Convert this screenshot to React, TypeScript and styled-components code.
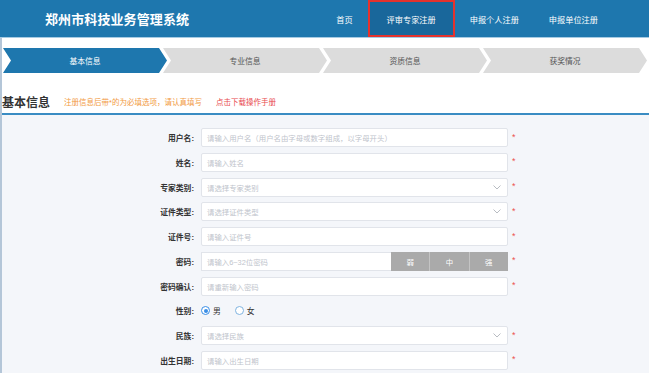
import React from 'react';
import styled, { createGlobalStyle } from 'styled-components';

const GlobalStyle = createGlobalStyle`
  html, body {
    margin: 0;
    padding: 0;
    background: #ffffff;
    font-family: 'Liberation Sans', 'Noto Sans CJK SC', sans-serif;
  }
`;

const StyledHeader = styled.div`
  height: 37px;
  background-color: #1e77ae;
  border-bottom: 1px solid #a6cbe3;
  display: flex;
  align-items: stretch;
  justify-content: space-between;
  padding: 0 36px 0 45px;
`;

const StyledTitle = styled.div`
  color: #ffffff;
  font-size: 13px;
  font-weight: bold;
  display: flex;
  align-items: center;
  letter-spacing: 0.1px;
`;

const StyledNav = styled.div`
  display: flex;
  align-items: stretch;
`;

const StyledNavItem = styled.div<{ $active?: boolean }>`
  display: flex;
  align-items: center;
  color: #ffffff;
  font-size: 8.2px;
  padding: ${(p) => (p.$active ? '0 17px' : '0 15px')};
  background: ${(p) => (p.$active ? '#19679b' : 'transparent')};
  border: ${(p) => (p.$active ? '2px solid #e5322d' : 'none')};
  box-sizing: border-box;
`;

const StyledBody = styled.div`
  border-left: 2px solid #b4c6d8;
`;

const StyledSteps = styled.div`
  display: flex;
  padding: 10px 0 0 1px;
`;

const StyledStep = styled.div<{ $active?: boolean; $first?: boolean }>`
  width: 164px;
  height: 25px;
  margin-left: ${(p) => (p.$first ? '0' : '-4px')};
  background: ${(p) => (p.$active ? '#1e77ae' : '#dcdcdc')};
  color: ${(p) => (p.$active ? '#ffffff' : '#555555')};
  font-size: 7.8px;
  display: flex;
  align-items: center;
  justify-content: center;
  clip-path: polygon(
    0 0,
    calc(100% - 8px) 0,
    100% 50%,
    calc(100% - 8px) 100%,
    0 100%,
    8px 50%
  );
`;

const StyledHeadingRow = styled.div`
  display: flex;
  align-items: center;
  height: 20px;
  margin-top: 18px;
  border-bottom: 2px solid #3a8cc3;
  padding-bottom: 2px;
`;

const StyledHeading = styled.div`
  font-size: 12px;
  font-weight: bold;
  color: #333333;
  margin-right: 14px;
`;

const StyledNote = styled.span<{ $color: string }>`
  font-size: 7.5px;
  color: ${(p) => p.$color};
  margin-right: 14px;
`;

const StyledForm = styled.div`
  background: #f4f6fa;
  padding-top: 13px;
  padding-bottom: 20px;
  display: flex;
  flex-direction: column;
  gap: 5.75px;
`;

const StyledRow = styled.div`
  display: flex;
  align-items: center;
  height: 19px;
`;

const StyledLabelCell = styled.div`
  width: 199px;
  display: flex;
  justify-content: flex-end;
`;

const StyledLabel = styled.div`
  text-align: right;
  font-size: 7.8px;
  font-weight: bold;
  color: #333333;
  padding-right: 7px;
`;

const StyledField = styled.div`
  width: 307px;
  height: 19px;
  box-sizing: border-box;
  background: #ffffff;
  border: 1px solid #e1e4ea;
  border-radius: 2px;
  display: flex;
  align-items: center;
  padding: 0 6px 0 5px;
  font-size: 7.4px;
  color: #c0c4cc;
`;

const StyledPlaceholder = styled.span`
  flex: 1;
`;

const StyledPasswordBox = styled.div`
  width: 307px;
  height: 19px;
  display: flex;
`;

const StyledPasswordInput = styled.div`
  width: 190px;
  box-sizing: border-box;
  background: #ffffff;
  border: 1px solid #e1e4ea;
  border-right: none;
  display: flex;
  align-items: center;
  padding-left: 5px;
  font-size: 7.4px;
  color: #c0c4cc;
`;

const StyledStrength = styled.div`
  flex: 1;
  background: #aaaaaa;
  color: #ffffff;
  font-size: 7.4px;
  display: flex;
  align-items: center;
  justify-content: center;
  & + & {
    border-left: 1px solid #c4c4c4;
  }
`;

const StyledStar = styled.span`
  color: #ec5050;
  font-size: 9px;
  margin-left: 4px;
  margin-top: -2px;
`;

const StyledRadioGroup = styled.div`
  display: flex;
  align-items: center;
  font-size: 7.8px;
  color: #333333;
`;

const StyledRadio = styled.span<{ $checked?: boolean }>`
  width: 9px;
  height: 9px;
  border-radius: 50%;
  box-sizing: border-box;
  border: 1px solid ${(p) => (p.$checked ? '#3a8ee6' : '#7fb3e0')};
  background: #ffffff;
  display: inline-flex;
  align-items: center;
  justify-content: center;
  margin-right: 3px;

  &::after {
    content: '';
    width: 4px;
    height: 4px;
    border-radius: 50%;
    background: ${(p) => (p.$checked ? '#3a8ee6' : 'transparent')};
  }
`;

const StyledRadioOption = styled.label`
  display: flex;
  align-items: center;
  margin-right: 14px;
`;

const Chevron = () => (
  <svg width="8" height="5" viewBox="0 0 8 5">
    <path d="M0.5 0.5 L4 4 L7.5 0.5" fill="none" stroke="#b0b4bb" strokeWidth="0.9" />
  </svg>
);

type RowDef = { label: string; placeholder?: string; select?: boolean; kind?: 'password' | 'gender' };

const rows: RowDef[] = [
  { label: '用户名:', placeholder: '请输入用户名（用户名由字母或数字组成，以字母开头）' },
  { label: '姓名:', placeholder: '请输入姓名' },
  { label: '专家类别:', placeholder: '请选择专家类别', select: true },
  { label: '证件类型:', placeholder: '请选择证件类型', select: true },
  { label: '证件号:', placeholder: '请输入证件号' },
  { label: '密码:', placeholder: '请输入6~32位密码', kind: 'password' },
  { label: '密码确认:', placeholder: '请重新输入密码' },
  { label: '性别:', kind: 'gender' },
  { label: '民族:', placeholder: '请选择民族', select: true },
  { label: '出生日期:', placeholder: '请输入出生日期' },
];

const steps = ['基本信息', '专业信息', '资质信息', '获奖情况'];

const App: React.FC = () => {
  return (
    <>
      <GlobalStyle />
      <StyledHeader>
        <StyledTitle>郑州市科技业务管理系统</StyledTitle>
        <StyledNav>
          <StyledNavItem>首页</StyledNavItem>
          <StyledNavItem $active>评审专家注册</StyledNavItem>
          <StyledNavItem>申报个人注册</StyledNavItem>
          <StyledNavItem>申报单位注册</StyledNavItem>
        </StyledNav>
      </StyledHeader>
      <StyledBody>
        <StyledSteps>
          {steps.map((s, i) => (
            <StyledStep key={s} $active={i === 0} $first={i === 0}>
              {s}
            </StyledStep>
          ))}
        </StyledSteps>
        <StyledHeadingRow>
          <StyledHeading>基本信息</StyledHeading>
          <StyledNote $color="#f29a3f">注册信息后带*的为必填选项，请认真填写</StyledNote>
          <StyledNote $color="#e8474b">点击下载操作手册</StyledNote>
        </StyledHeadingRow>
        <StyledForm>
          {rows.map((r) => (
            <StyledRow key={r.label}>
              <StyledLabelCell>
                <StyledLabel>{r.label}</StyledLabel>
              </StyledLabelCell>
              {r.kind === 'gender' ? (
                <StyledRadioGroup>
                  <StyledRadioOption>
                    <StyledRadio $checked />男
                  </StyledRadioOption>
                  <StyledRadioOption>
                    <StyledRadio />女
                  </StyledRadioOption>
                </StyledRadioGroup>
              ) : r.kind === 'password' ? (
                <>
                  <StyledPasswordBox>
                    <StyledPasswordInput>{r.placeholder}</StyledPasswordInput>
                    <StyledStrength>弱</StyledStrength>
                    <StyledStrength>中</StyledStrength>
                    <StyledStrength>强</StyledStrength>
                  </StyledPasswordBox>
                  <StyledStar>*</StyledStar>
                </>
              ) : (
                <>
                  <StyledField>
                    <StyledPlaceholder>{r.placeholder}</StyledPlaceholder>
                    {r.select && <Chevron />}
                  </StyledField>
                  <StyledStar>*</StyledStar>
                </>
              )}
            </StyledRow>
          ))}
        </StyledForm>
      </StyledBody>
    </>
  );
};

export default App;
